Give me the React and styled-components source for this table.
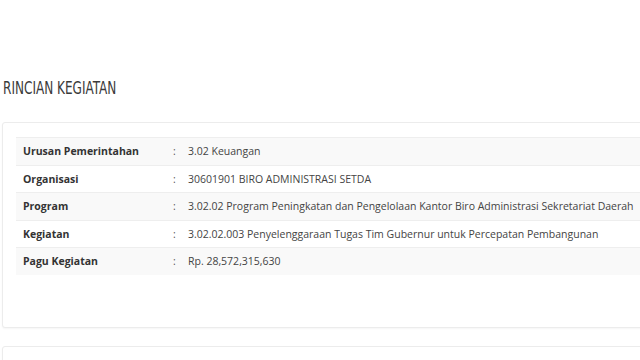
import React from 'react';
import styled, { createGlobalStyle } from 'styled-components';

const GlobalStyle = createGlobalStyle`
  body {
    margin: 0;
    background: #ffffff;
    font-family: 'Open Sans', 'Noto Sans', sans-serif;
    color: #333333;
    overflow: hidden;
  }
`;

const Page = styled.div`
  width: 640px;
  height: 360px;
  overflow: hidden;
  padding: 76px 0 0 2px;
  box-sizing: border-box;
`;

const Title = styled.h2`
  margin: 0 0 22px 1px;
  font-family: 'DejaVu Sans Condensed', 'DejaVu Sans', sans-serif;
  font-size: 18px;
  line-height: 24px;
  font-weight: 400;
  color: #3a3a3a;
  white-space: nowrap;
  transform: scaleX(0.745);
  transform-origin: left top;
`;

const Card = styled.div`
  width: 700px;
  height: ${({ h }) => h}px;
  border: 1px solid #ececec;
  border-radius: 3px;
  background: #ffffff;
  box-shadow: 0 1px 2px rgba(0, 0, 0, 0.04);
  padding: 14px 0 0 13px;
  box-sizing: border-box;
  margin-bottom: 18px;
`;

const Table = styled.table`
  width: 687px;
  border-collapse: collapse;
  font-size: 10.5px;
`;

const Row = styled.tr`
  background: ${({ striped }) => (striped ? '#f9f9f9' : '#ffffff')};
  border-top: 1px solid #eeeeee;
`;

const Label = styled.td`
  width: 150px;
  height: 26.5px;
  padding: 0 0 0 7px;
  font-weight: 700;
  color: #333333;
  white-space: nowrap;
`;

const Colon = styled.td`
  width: 15px;
  padding: 0;
  color: #555555;
`;

const Value = styled.td`
  padding: 0;
  color: #444444;
  white-space: nowrap;
`;

const rows = [
  ['Urusan Pemerintahan', '3.02 Keuangan'],
  ['Organisasi', '30601901 BIRO ADMINISTRASI SETDA'],
  ['Program', '3.02.02 Program Peningkatan dan Pengelolaan Kantor Biro Administrasi Sekretariat Daerah'],
  ['Kegiatan', '3.02.02.003 Penyelenggaraan Tugas Tim Gubernur untuk Percepatan Pembangunan'],
  ['Pagu Kegiatan', 'Rp. 28,572,315,630'],
];

const App = () => (
  <>
    <GlobalStyle />
    <Page>
      <Title>RINCIAN KEGIATAN</Title>
      <Card h={206}>
        <Table>
          <tbody>
            {rows.map(([label, value], i) => (
              <Row key={label} striped={i % 2 === 0}>
                <Label>{label}</Label>
                <Colon>:</Colon>
                <Value>{value}</Value>
              </Row>
            ))}
          </tbody>
        </Table>
      </Card>
      <Card h={60} />
    </Page>
  </>
);

export default App;
